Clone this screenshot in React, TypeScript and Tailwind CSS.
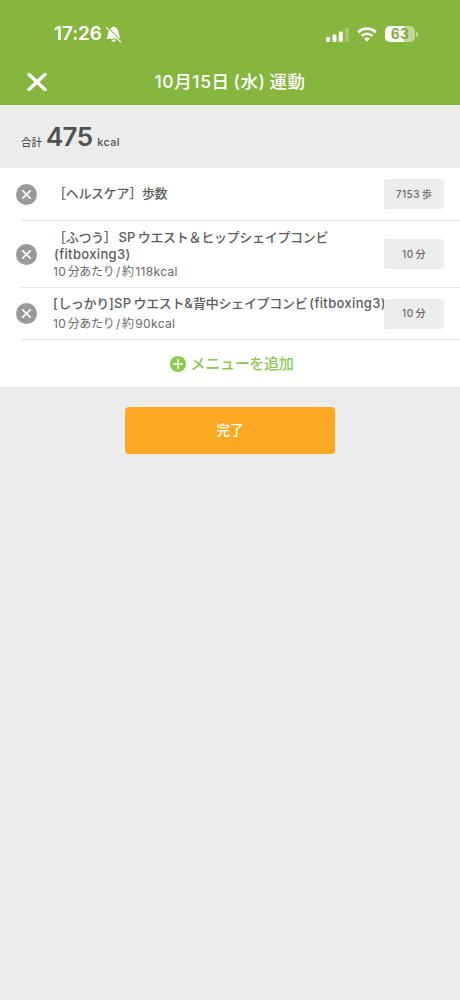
type Exercise = {
  id: string;
  name: string[];
  note?: string;
  amount: string;
  rowClass: string;
  textClass: string;
  noteClass?: string;
};

const exercises: Exercise[] = [
  {
    id: "steps",
    name: ["［ヘルスケア］歩数"],
    amount: "7153 歩",
    rowClass: "h-[52px]",
    textClass: "pb-[2px]",
  },
  {
    id: "waist-hip",
    name: ["［ふつう］ SP ウエスト＆ヒップシェイプコンビ", "(fitboxing3)"],
    note: "10 分あたり / 約 118kcal",
    amount: "10 分",
    rowClass: "h-[66px]",
    textClass: "pt-[2px]",
  },
  {
    id: "waist-back",
    name: ["[しっかり]SP ウエスト&背中シェイプコンビ (fitboxing3)"],
    note: "10 分あたり / 約 90kcal",
    amount: "10 分",
    rowClass: "h-[51px]",
    textClass: "",
    noteClass: "mt-[3px]",
  },
];

// 英数字と日本語で字間を変える
function MixedText({ text }: { text: string }) {
  return (
    <>
      {text.split(/([\x21-\x7e]+)/).map((part, i) => (
        <span key={i} className={i % 2 === 1 ? "tracking-[0.35px]" : "tracking-[-0.3px]"}>
          {part}
        </span>
      ))}
    </>
  );
}

function StatusBar() {
  return (
    <div className="flex h-[60px] items-start justify-between pt-[22px] pr-[42px] pl-[54px]">
      <div className="flex h-6 items-center gap-[3px] text-white">
        <span className="text-[19px] font-semibold tracking-[-0.1px]">17:26</span>
        <svg width="17" height="17" viewBox="0 0 17 17" fill="none">
          <path
            d="M8.5 0.6C10 0.6 10.4 1.6 10.7 2C12.9 2.8 13.5 4.8 13.6 6.4C13.7 9.6 15.2 10.6 15.2 12V12.7H1.8V12C1.8 10.6 3.3 9.6 3.4 6.4C3.5 4.8 4.1 2.8 6.3 2C6.6 1.6 7 0.6 8.5 0.6Z"
            fill="white"
          />
          <path d="M6.3 13.8H10.7C10.4 15.3 9.5 16 8.5 16C7.5 16 6.6 15.3 6.3 13.8Z" fill="white" />
          <path d="M2.2 0.8L16.3 14.9" stroke="#87b63f" strokeWidth="1.2" />
          <path d="M1.2 1.4L15.6 15.8" stroke="white" strokeWidth="1.2" strokeLinecap="round" />
        </svg>
      </div>
      <div className="flex h-6 items-center gap-2">
        <svg width="23" height="15" viewBox="0 0 23 15" fill="white">
          <rect x="0" y="10" width="4" height="5" rx="1.2" />
          <rect x="6.5" y="7.5" width="4" height="7.5" rx="1.2" />
          <rect x="12.8" y="4.5" width="4" height="10.5" rx="1.2" />
          <rect x="19" y="1" width="4" height="14" rx="1.2" opacity="0.25" />
        </svg>
        <svg width="20" height="15" viewBox="0 0 20 15" fill="none">
          <path d="M1.2 5.3C6.2 0.4 13.8 0.4 18.8 5.3" stroke="white" strokeWidth="2.7" />
          <path d="M4.6 8.8C7.7 5.9 12.3 5.9 15.4 8.8" stroke="white" strokeWidth="2.5" />
          <path d="M10 14.8L6.9 11.6C8.7 10 11.3 10 13.1 11.6Z" fill="white" />
        </svg>
        <div className="flex items-center gap-px">
          <div className="flex h-4 w-[30px] items-center justify-center rounded-[5px] bg-linear-to-r from-white from-63% to-[#c0da96] to-63%">
            <span className="text-[14px] leading-4 font-semibold tracking-[0.2px] text-[#79a535]">63</span>
          </div>
          <div className="h-[5px] w-[2px] rounded-r-full bg-[#c0da96]" />
        </div>
      </div>
    </div>
  );
}

function DeleteIcon() {
  return (
    <svg width="21" height="21" viewBox="0 0 21 21" fill="none">
      <circle cx="10.5" cy="10.5" r="10.5" fill="#999999" />
      <path
        d="M6.8 6.8L14.2 14.2M14.2 6.8L6.8 14.2"
        stroke="white"
        strokeWidth="1.7"
        strokeLinecap="round"
      />
    </svg>
  );
}

function ExerciseRow({ exercise }: { exercise: Exercise }) {
  return (
    <li>
      <div className={`flex items-center px-4 ${exercise.rowClass}`}>
        <button className="shrink-0" aria-label="削除">
          <DeleteIcon />
        </button>
        <div className={`ml-4 w-[331px] shrink-0 whitespace-nowrap ${exercise.textClass}`}>
          <div className="text-[13px] leading-[17px] font-medium text-[#5c5c5c] [word-spacing:-1.3px]">
            {exercise.name.map((line, i) => (
              <p key={line} className={i > 0 ? "pl-px" : ""}>
                <MixedText text={line} />
              </p>
            ))}
          </div>
          {exercise.note && (
            <p
              className={`text-[12px] leading-[18px] text-[#696969] [word-spacing:-1.6px] ${exercise.noteClass ?? ""}`}
            >
              <MixedText text={exercise.note} />
            </p>
          )}
        </div>
        {/* 長い名前は数値の下に隠れる */}
        <span className="z-10 flex h-[30px] w-[60px] shrink-0 items-center justify-center rounded-[3px] bg-[#ececec] text-[10px] font-medium tracking-[0.5px] text-[#6a6a6a] [word-spacing:-1.5px]">
          {exercise.amount}
        </span>
      </div>
      <div className="ml-[21px] h-px bg-[#e4e4e4]" />
    </li>
  );
}

export default function App() {
  return (
    <div className="h-[1000px] w-[460px] bg-[#ececec] font-['Inter','Noto_Sans_CJK_JP',sans-serif]">
      <header className="h-[105px] bg-[#87b63f]">
        <StatusBar />
        <div className="relative flex h-[45px] items-center justify-center">
          <button className="absolute top-[13px] left-[27px]" aria-label="閉じる">
            <svg width="20" height="18" viewBox="0 0 20 18" fill="none">
              <path d="M2 1.5L18 16.5M18 1.5L2 16.5" stroke="white" strokeWidth="3.5" strokeLinecap="round" />
            </svg>
          </button>
          <h1 className="text-[17.5px] font-medium tracking-[0.6px] text-white [word-spacing:-1.5px]">
            10月15日 (水) 運動
          </h1>
        </div>
      </header>

      {/* 合計 */}
      <div className="flex h-[63px] items-baseline pt-[12px] pl-[21px] text-[#505050]">
        <span className="text-[10.5px] font-medium">合計</span>
        <span className="ml-[4px] text-[26px] font-semibold tracking-[-0.7px]">475</span>
        <span className="ml-[5px] text-[11px] font-medium tracking-[0.3px]">kcal</span>
      </div>

      {/* 運動メニュー一覧 */}
      <div className="bg-white">
        <ul>
          {exercises.map((exercise) => (
            <ExerciseRow key={exercise.id} exercise={exercise} />
          ))}
        </ul>
        <button className="flex h-[47px] w-full items-center justify-center gap-[5px] pl-[3px] text-[#8dc853]">
          <svg width="16" height="16" viewBox="0 0 16 16" fill="none">
            <circle cx="8" cy="8" r="8" fill="#8dc853" />
            <path d="M8 3.5V12.5M3.5 8H12.5" stroke="white" strokeWidth="1.3" strokeLinecap="round" />
          </svg>
          <span className="pt-[2px] text-[15px] font-medium tracking-[-0.3px]">メニューを追加</span>
        </button>
      </div>

      <div className="flex justify-center pt-5">
        <button className="h-[47px] w-[210px] rounded-[4px] bg-[#fba922] text-[13.5px] font-medium text-white">
          完了
        </button>
      </div>
    </div>
  );
}
